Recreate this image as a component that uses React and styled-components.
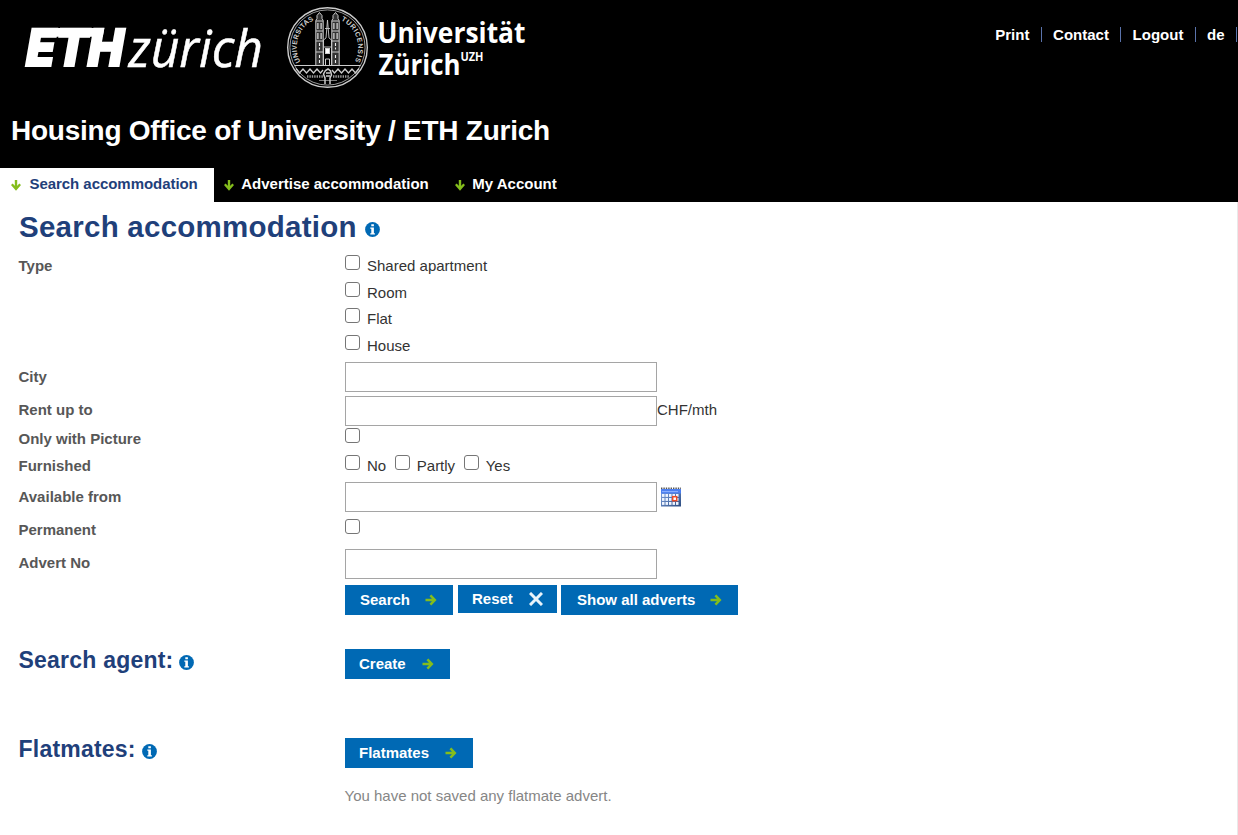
import React from 'react';
import styled, { createGlobalStyle } from 'styled-components';

const Global = createGlobalStyle`
  * { box-sizing: border-box; }
  body { margin: 0; background: #fff; font-family: "Liberation Sans", Arial, sans-serif; font-size: 15px; color: #333; overflow: hidden; }
  h1, h2, p { margin: 0; }
`;

const Page = styled.div`height: 835px; display: flex; flex-direction: column;`;
const Header = styled.header`height: 202px; background: #000; color: #fff; display: flex; flex-direction: column;`;
const HeaderTop = styled.div`height: 105px; display: flex; justify-content: space-between; align-items: flex-start;`;
const MetaNav = styled.nav`display: flex; margin: 27px 1px 0 0;`;
const MetaLink = styled.a`
  height: 15px; line-height: 15px; padding: 0 11.4px 0 11.3px; font-weight: 700; color: #fff;
  border-right: 1px solid #5a73ab;
`;
const SiteTitle = styled.div`
  height: 63px; padding-left: 11px; line-height: 51px; font-size: 28px; font-weight: 700; white-space: nowrap;
  letter-spacing: -0.25px;
`;
const Tabs = styled.nav`display: flex; height: 34px;`;
const Tab = styled.a`
  display: flex; align-items: center; gap: ${(p) => (p.$active ? 8.5 : 7.5)}px; padding: 0 16px 3px 11px; font-weight: 700; white-space: nowrap;
  letter-spacing: ${(p) => (p.$active ? -0.05 : 0)}px;
  background: ${(p) => (p.$active ? '#fff' : '#000')}; color: ${(p) => (p.$active ? '#1f407a' : '#fff')};
  & + & { padding-left: 10px; }
  svg { margin-top: 4px; flex: none; }
`;
const Main = styled.main`flex: 1; border-right: 1px solid #e9e9e9; padding-left: 18px;`;
const Heading = styled.h1`
  display: flex; align-items: center; height: 53px; padding: 0 0 4px 1px; gap: 8px;
  font-size: 29.5px; letter-spacing: 0.25px; font-weight: 700; color: #1f407a;
  svg { margin-top: 5px; }
`;
const Row = styled.div`
  display: grid; grid-template-columns: 327px 1fr; align-items: start; height: ${(p) => p.$height}px;
`;
const Label = styled.label`
  line-height: 20px; padding: ${(p) => p.$top}px 0 0 0.5px; font-weight: 700; color: #575757;
`;
const Field = styled.div`display: flex; align-items: flex-start;`;
const OptionList = styled.div`display: flex; flex-direction: column;`;
const Option = styled.label`
  display: flex; align-items: flex-start; gap: 7px; height: 26.6px; margin-right: ${(p) => p.$gap || 0}px;
  span { line-height: 20px; margin-top: 1px; }
`;
const Checkbox = styled.input.attrs({ type: 'checkbox' })`
  appearance: none; flex: none; width: 15px; height: 15px; margin: 0; border: 1.3px solid #767676; border-radius: 3px; background: #fff;
`;
const TextInput = styled.input.attrs({ type: 'text' })`
  width: 312px; height: 30px; margin: 0; padding: 0 6px; border: 1px solid #a5a5a5; border-radius: 0; background: #fff;
`;
const Unit = styled.span`line-height: 20px; margin-top: 4px;`;
const CalendarButton = styled.button`border: 0; background: none; padding: 0; margin: 5px 0 0 4px; height: 20px; line-height: 0;`;
const Button = styled.button`
  display: flex; align-items: center; justify-content: space-between; width: ${(p) => p.$width}px; height: ${(p) => p.$height || 30}px;
  margin: 0 ${(p) => p.$gap || 0}px 0 0; padding: 0 ${(p) => p.$right || 16}px 1px ${(p) => p.$left || 14}px;
  border: 0; background: #0069b4; color: #fff; font: 700 15px "Liberation Sans", Arial, sans-serif; white-space: nowrap;
  svg { margin-top: 1px; }
`;
const Section = styled(Row)`margin-top: ${(p) => p.$before}px;`;
const SubHeading = styled.h2`
  display: flex; align-items: center; height: 23px; padding-left: 0.5px; gap: 6px; font-size: 23px; letter-spacing: 0.22px; font-weight: 700; color: #1f407a;
  svg { margin-top: 4px; }
`;
const Note = styled.p`padding: 18px 0 0 326.5px; line-height: 20px; color: #868686;`;

const ArrowDown = () => (
  <svg width="10" height="11" viewBox="0 0 10 11" fill="none" stroke="#84bd1c" strokeWidth="2.4">
    <path d="M5 0V9.400M.8 4.200 5 9 9.200 4.200" />
  </svg>
);
const ArrowRight = () => (
  <svg width="12" height="12" viewBox="0 0 12 12" fill="none" stroke="#84bd1c" strokeWidth="2.500">
    <path d="M.5 6H10M5.400 1.400 9.800 6 5.400 10.600" />
  </svg>
);
const Cross = () => (
  <svg width="14" height="14" viewBox="0 0 14 14" stroke="#e9f3fa" strokeWidth="3">
    <path d="M1 1 13 13M13 1 1 13" />
  </svg>
);
const Info = () => (
  <svg width="15" height="15" viewBox="0 0 15 15">
    <circle cx="7.5" cy="7.5" r="7.4" fill="#0069b4" />
    <path d="M6.300 2.300h2.600v2H6.300zM5.300 5.600h3.600v5.700h1v1.200H5.300v-1.200h1V6.800h-1z" fill="#fff" />
  </svg>
);
const Calendar = () => (
  <svg width="20" height="20" viewBox="0 0 20 20">
    <defs>
      <linearGradient id="calBody" x1="0" y1="0" x2="1" y2="1">
        <stop offset="0" stopColor="#86a9e8" />
        <stop offset="1" stopColor="#2c4c80" />
      </linearGradient>
    </defs>
    <rect x="0" y="2" width="20" height="17.500" fill="url(#calBody)" />
    <rect x="0" y="2" width="20" height="4.500" fill="#4c7ff0" />
    <path d="M1 4.600H17" stroke="#8fb2ff" />
    <path d="M0 1.300H20" stroke="#555" strokeWidth="1.600" strokeDasharray="1.400 1" />
    {[7, 11, 15].map((y) => [1, 4.5, 8, 11.5, 15].map((x) => (
      <rect key={`${x}-${y}`} x={x} y={y} width="2.500" height="2.900" fill="#eef4ff" />
    )))}
    <rect x="11.700" y="9.700" width="4" height="4" fill="#fff" stroke="#ee4a24" strokeWidth="1.500" />
  </svg>
);

const Tower = ({ x }) => (
  <g transform={`translate(${x} 0)`} stroke="#ccc" fill="none">
    <path d="M-3.700 66V20.500L-2.500 18.500V15.500L0 12.500 2.500 15.500V18.500L3.700 20.500V66" strokeWidth="1" fill="#333" />
    <path d="M-3.500 21H3.500M-3.500 31H3.500M-3.500 41H3.500M-3.500 52H3.500" strokeWidth="1.100" />
    <path d="M-1.600 23v6M1.600 23v6M-1.600 33v6M1.600 33v6M0 43v3M0 47.500v2M0 55v3M0 60v3" strokeWidth="1.100" stroke="#eee" />
  </g>
);

const Logos = () => (
  <svg width="560" height="100" viewBox="0 0 560 100" fill="#fff">
    <g transform="translate(23.500 66.300) skewX(-10)">
      <text x="0" y="0" fontFamily="Inter, sans-serif" fontWeight="900" fontSize="51.500" textLength="97.500" lengthAdjust="spacingAndGlyphs" stroke="#fff" strokeWidth="1.800">ETH</text>
      <rect x="20" y="-38.300" width="54" height="8.800" />
    </g>
    <text x="128.500" y="66.500" fontFamily="'Open Sans', sans-serif" fontStyle="italic" fontWeight="400" fontSize="51" textLength="134.500" lengthAdjust="spacingAndGlyphs" stroke="#fff" strokeWidth="0.500">zürich</text>

    <g fill="none" stroke="#ccc">
      <circle cx="327.500" cy="47.500" r="39.800" strokeWidth="1.400" />
      <circle cx="327.500" cy="47.500" r="37.600" stroke="#aaa" strokeWidth="0.900" />
    </g>
    <path id="sealLeft" d="M300.500 62A30.300 30.300 0 0 1 315 19.600" fill="none" />
    <path id="sealRight" d="M341 20.300A30.300 30.300 0 0 1 354 63" fill="none" />
    <g fill="#ccc" fontFamily="'Liberation Sans', sans-serif" fontSize="7" fontWeight="700">
      <text><textPath href="#sealLeft" textLength="49">UNIVERSITAS</textPath></text>
      <text><textPath href="#sealRight" textLength="48">TURICENSIS</textPath></text>
    </g>
    <Tower x={319.5} />
    <Tower x={335.5} />
    <g stroke="#ccc" fill="none">
      <path d="M323.500 40 326 38 327.500 20 329 38 331.500 40V66M323.500 40V66M325 28.500H330M323.500 47H331.500" strokeWidth="0.900" />
      <rect x="325.500" y="48.500" width="4" height="5" fill="#fff" />
      <path d="M325.500 66V59H329.500V66" />
      <path d="M294.500 65.500H360.500" strokeWidth="1.200" />
      <path d="M296 68.500 299.500 73 303 69 306.500 73 310 69 313.500 73 317 69 320.500 73 323 70M332 70 334.500 73 338 69 341.500 73 345 69 348.500 73 352 69 355.500 73 359 68.500" strokeWidth="1.300" />
      <path d="M307 76.500H323M333 76.500H349" stroke="#999" strokeWidth="2.600" strokeDasharray="1.400 1" />
      <path d="M319 80.500H337" stroke="#888" strokeWidth="0.900" />
      <path d="M325 84V78L323.500 74 325.500 70.500 328 69 330.500 71 331.500 75 330 78V84" strokeWidth="1.500" />
      <path d="M326 73H330M326 76H330" strokeWidth="1.500" />
    </g>

    <g fontFamily="'Open Sans', sans-serif" fontWeight="700">
      <text x="377.500" y="43" fontSize="28.500" textLength="148" lengthAdjust="spacingAndGlyphs">Universität</text>
      <text x="378.500" y="75.300" fontSize="28.500" textLength="82" lengthAdjust="spacingAndGlyphs">Zürich</text>
      <text x="460.500" y="60.500" fontSize="11.500" textLength="23" lengthAdjust="spacingAndGlyphs">UZH</text>
    </g>
  </svg>
);

export default function App() {
  return (
    <Page>
      <Global />
      <Header>
        <HeaderTop>
          <Logos />
          <MetaNav>
            <MetaLink>Print</MetaLink>
            <MetaLink>Contact</MetaLink>
            <MetaLink>Logout</MetaLink>
            <MetaLink>de</MetaLink>
          </MetaNav>
        </HeaderTop>
        <SiteTitle>Housing Office of University / ETH Zurich</SiteTitle>
        <Tabs>
          <Tab $active><ArrowDown />Search accommodation</Tab>
          <Tab><ArrowDown />Advertise accommodation</Tab>
          <Tab><ArrowDown />My Account</Tab>
        </Tabs>
      </Header>
      <Main>
        <Heading>Search accommodation<Info /></Heading>
        <Row $height={107}>
          <Label $top={1}>Type</Label>
          <OptionList>
            {['Shared apartment', 'Room', 'Flat', 'House'].map((name) => (
              <Option key={name}><Checkbox /><span>{name}</span></Option>
            ))}
          </OptionList>
        </Row>
        <Row $height={34}><Label $top={5}>City</Label><Field><TextInput /></Field></Row>
        <Row $height={32}><Label $top={4}>Rent up to</Label><Field><TextInput /><Unit>CHF/mth</Unit></Field></Row>
        <Row $height={27}><Label $top={1}>Only with Picture</Label><Field><Checkbox /></Field></Row>
        <Row $height={27}>
          <Label $top={1}>Furnished</Label>
          <Field>
            <Option $gap={8.6}><Checkbox /><span>No</span></Option>
            <Option $gap={8.6}><Checkbox /><span>Partly</span></Option>
            <Option><Checkbox /><span>Yes</span></Option>
          </Field>
        </Row>
        <Row $height={37}>
          <Label $top={5}>Available from</Label>
          <Field><TextInput /><CalendarButton><Calendar /></CalendarButton></Field>
        </Row>
        <Row $height={30}><Label $top={1}>Permanent</Label><Field><Checkbox /></Field></Row>
        <Row $height={36}><Label $top={4}>Advert No</Label><Field><TextInput /></Field></Row>
        <Row $height={30}>
          <span />
          <Field>
            <Button $width={108} $gap={5} $left={15}>Search<ArrowRight /></Button>
            <Button $width={99} $gap={4} $height={28} $right={14}>Reset<Cross /></Button>
            <Button $width={177} $left={16}>Show all adverts<ArrowRight /></Button>
          </Field>
        </Row>
        <Section $before={34} $height={30}>
          <SubHeading>Search agent:<Info /></SubHeading>
          <Button $width={105}>Create<ArrowRight /></Button>
        </Section>
        <Section $before={59} $height={30}>
          <SubHeading>Flatmates:<Info /></SubHeading>
          <Button $width={128}>Flatmates<ArrowRight /></Button>
        </Section>
        <Note>You have not saved any flatmate advert.</Note>
      </Main>
    </Page>
  );
}
